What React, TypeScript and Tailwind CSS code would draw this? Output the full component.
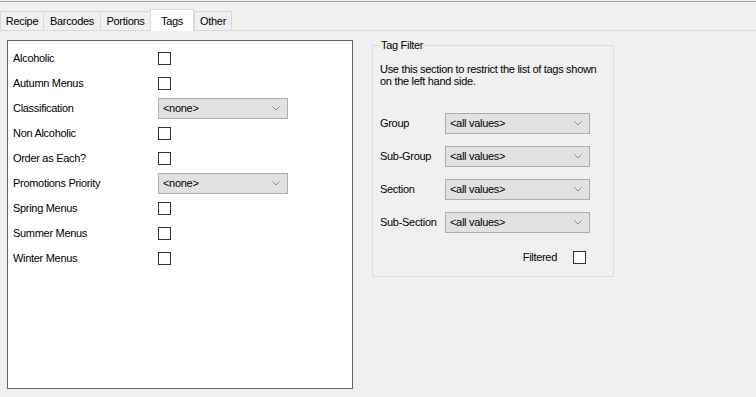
import React from 'react';

const font = { fontFamily: '"Liberation Sans", Arial, sans-serif', letterSpacing: '-0.3px' };

const tabs = [
  { name: 'Recipe', w: 'w-[43px]' },
  { name: 'Barcodes', w: 'w-[57px]' },
  { name: 'Portions', w: 'w-[50px]' },
  { name: 'Tags', w: 'w-[44px]' },
  { name: 'Other', w: 'w-[38px]' },
];

type Row = { label: string; kind: 'check' | 'select' };

const rows: Row[] = [
  { label: 'Alcoholic', kind: 'check' },
  { label: 'Autumn Menus', kind: 'check' },
  { label: 'Classification', kind: 'select' },
  { label: 'Non Alcoholic', kind: 'check' },
  { label: 'Order as Each?', kind: 'check' },
  { label: 'Promotions Priority', kind: 'select' },
  { label: 'Spring Menus', kind: 'check' },
  { label: 'Summer Menus', kind: 'check' },
  { label: 'Winter Menus', kind: 'check' },
];

function CheckBox() {
  return <div className="w-[13px] h-[13px] border border-[#333333] bg-white" />;
}

function Combo({ value, width }: { value: string; width: string }) {
  return (
    <div className={`${width} h-[21px] border border-[#adadad] bg-[#e1e1e1] flex items-center justify-between pl-[4px] pr-[7px]`}>
      <span className="text-[11px] text-black leading-none">{value}</span>
      <svg width="8" height="5" viewBox="0 0 8 5" fill="none">
        <path d="M0.5 0.5 L4 4 L7.5 0.5" stroke="#8a8a8a" strokeWidth="1" />
      </svg>
    </div>
  );
}

const filters = [
  { label: 'Group', mt: 'mt-[26px]' },
  { label: 'Sub-Group', mt: 'mt-[12px]' },
  { label: 'Section', mt: 'mt-[12px]' },
  { label: 'Sub-Section', mt: 'mt-[12px]' },
];

export default function App() {
  return (
    <div className="w-[756px] h-[397px] bg-[#f0f0f0] overflow-hidden text-black" style={font}>
      <div className="h-[1px] mt-[1px] bg-[#a0a0a0]" />

      <div className="flex items-end h-[29px] border-b border-[#d9d9d9]">
        {tabs.map((t) =>
          t.name === 'Tags' ? (
            <div
              key={t.name}
              className={`${t.w} h-[22px] -mb-[1px] bg-white border border-b-0 border-[#d9d9d9] flex justify-center items-start pt-[3px] text-[11px] z-10`}
            >
              {t.name}
            </div>
          ) : (
            <div
              key={t.name}
              className={`${t.w} h-[19px] border border-b-0 border-r-0 last:border-r border-[#d9d9d9] flex justify-center items-center text-[11px]`}
            >
              {t.name}
            </div>
          )
        )}
      </div>

      <div className="flex items-start">
        <div className="ml-[7px] mt-[9px] w-[346px] h-[349px] border border-[#646464] bg-white pl-[5px] pt-[5px]">
          {rows.map((r) => (
            <div key={r.label} className="h-[25px] flex items-center">
              <span className="w-[145px] text-[11px]">{r.label}</span>
              {r.kind === 'check' ? <CheckBox /> : <Combo value="<none>" width="w-[130px]" />}
            </div>
          ))}
        </div>

        <fieldset className="ml-[19px] mt-[8px] w-[242px] min-w-0 h-[238px] border border-[#dcdcdc] px-[7px]">
          <legend className="px-[1px] text-[11px] leading-[13px]">Tag Filter</legend>
          <p className="mt-[11px] text-[11px] leading-[12px]">
            Use this section to restrict the list of tags shown on the left hand side.
          </p>
          {filters.map((f) => (
            <div key={f.label} className={`${f.mt} flex items-center`}>
              <span className="w-[65px] text-[11px]">{f.label}</span>
              <Combo value="<all values>" width="w-[145px]" />
            </div>
          ))}
          <div className="mt-[16px] flex items-center justify-end pr-[20px]">
            <span className="text-[11px] mr-[16px]">Filtered</span>
            <CheckBox />
          </div>
        </fieldset>
      </div>
    </div>
  );
}
